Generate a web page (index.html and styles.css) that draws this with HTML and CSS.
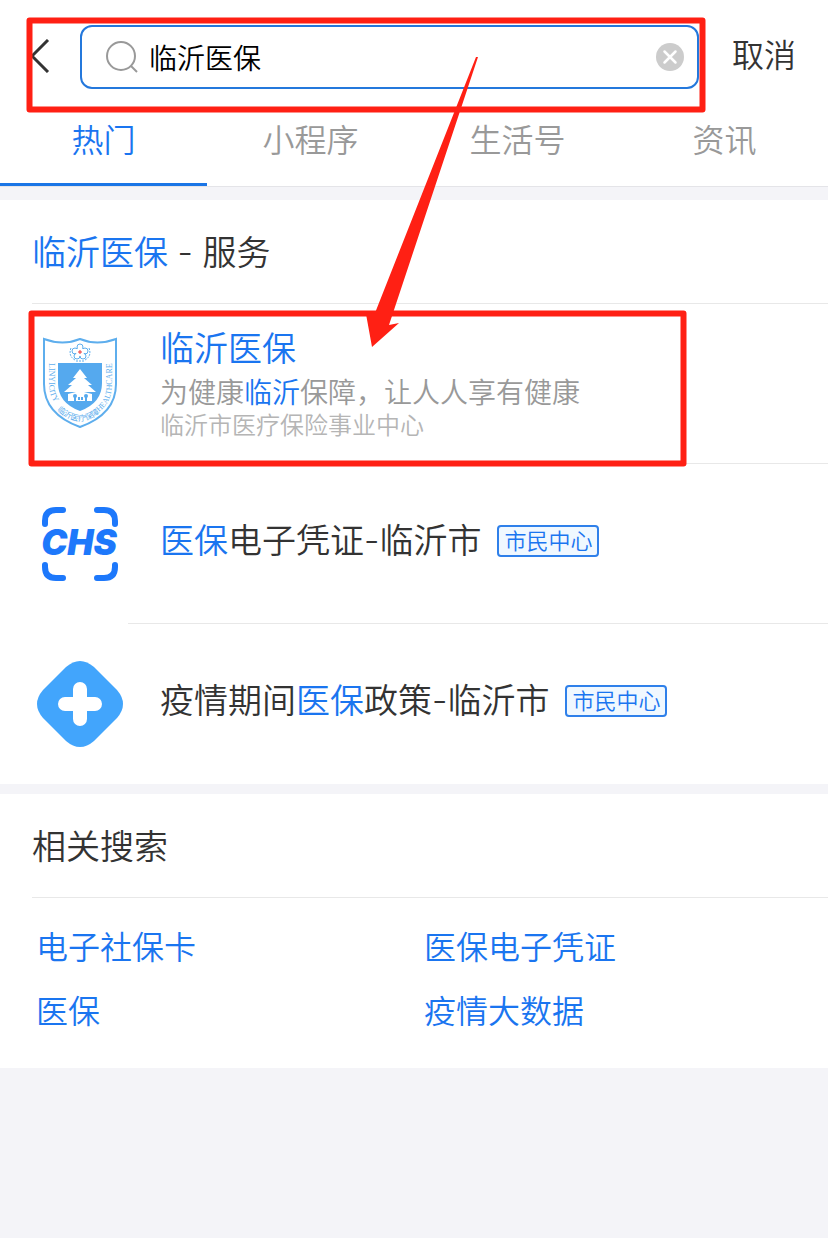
FILE: index.html
```html
<!DOCTYPE html>
<html lang="zh-CN">
<head>
<meta charset="utf-8">
<meta name="viewport" content="width=device-width, initial-scale=1">
<title>临沂医保</title>
<link rel="stylesheet" href="styles.css">
</head>
<body>
<header class="topbar">
  <button class="back" type="button" aria-label="返回">
    <svg width="20" height="34" viewBox="0 0 20 34"><path d="M18 1 2 17l16 16" fill="none" stroke="#333" stroke-width="3"/></svg>
  </button>
  <form class="search">
    <svg class="search-icon" width="34" height="34" viewBox="0 0 34 34" fill="none" stroke="#999" stroke-width="2"><circle cx="16" cy="16" r="14"/><path d="m26 26 6 6"/></svg>
    <input class="search-input" type="text" value="临沂医保" aria-label="搜索">
    <button class="clear" type="reset" aria-label="清除">
      <svg width="28" height="28" viewBox="0 0 28 28"><circle cx="14" cy="14" r="14" fill="#ccc"/><path d="m8.500 8.500 11 11m0-11-11 11" stroke="#fff" stroke-width="2.500" stroke-linecap="round"/></svg>
    </button>
  </form>
  <button class="cancel" type="button">取消</button>
</header>
<nav class="tabs">
  <a class="tab tab-active" href="#hot">热门</a>
  <a class="tab" href="#apps">小程序</a>
  <a class="tab" href="#life">生活号</a>
  <a class="tab" href="#news">资讯</a>
</nav>
<main>
  <section class="card services">
    <h2 class="card-title"><em>临沂医保</em> - 服务</h2>
    <ul class="results">
      <li class="result">
        <span class="result-icon">
          <svg width="76" height="94" viewBox="0 0 76 94">
            <path d="M2 2q19 7 36 0 17 7 36 0v45q0 30-36 43Q2 77 2 47z" fill="#fff" stroke="#5eaeed" stroke-width="2"/>
            <path d="M16 26h44v20q0 20-22 28-22-8-22-28z" fill="#55a9ee"/>
            <path d="m38 32 7 9h-3l8 7h-4l8 7H41v3h-6v-3H22l8-7h-4l8-7h-3z" fill="#fff"/>
            <path d="m26 57 12-3 12 3v7H26z" fill="#fff"/>
            <path d="M33 64v-5m4 4v-3m3 3v-3m4 4v-5" stroke="#55a9ee" stroke-width="2"/>
            <circle cx="33" cy="59" r="2" fill="#55a9ee"/><circle cx="44" cy="59" r="2" fill="#55a9ee"/>
            <g fill="none" stroke="#5eaeed"><circle cx="38" cy="10" r="3"/><circle cx="43" cy="14" r="3"/><circle cx="41" cy="19" r="3"/><circle cx="35" cy="19" r="3"/><circle cx="33" cy="14" r="3"/><path d="M29 11q-3 8 4 12m14-12q3 8-4 12M34 24h8" stroke-dasharray="2 1"/></g>
            <circle cx="38" cy="15" r="4" fill="#fff"/><path d="M36 15h4M38 13v4" stroke="#e33"/>
            <path id="ring-left" d="M7 26v21q0 16 13 25" fill="none"/>
            <path id="ring-base" d="M15 73q23 22 46 0" fill="none"/>
            <path id="ring-right" d="M57 75q13-10 13-28V20" fill="none"/>
            <g class="seal-text"><text><textPath href="#ring-left">LINYICITY</textPath></text><text class="seal-name"><textPath href="#ring-base">临沂医疗保障</textPath></text><text><textPath href="#ring-right">HEALTHCARE</textPath></text></g>
          </svg>
        </span>
        <div class="result-body result-stack">
          <h3 class="result-title"><a href="#s1"><em>临沂医保</em></a></h3>
          <p class="result-desc">为健康<em>临沂</em>保障，让人人享有健康</p>
          <p class="result-org">临沂市医疗保险事业中心</p>
        </div>
      </li>
      <li class="result">
        <span class="result-icon">
          <svg width="80" height="78" viewBox="0 0 80 78">
            <path d="M5 19v-3Q5 5 16 5h7M57 5h7q11 0 11 11v3M5 60v2q0 11 11 11h7m34 0h7q11 0 11-11v-2" fill="none" stroke="#1d78fb" stroke-width="6"  stroke-linecap="round"/>
            <text class="chs" x="39" y="50" text-anchor="middle">CHS</text>
          </svg>
        </span>
        <div class="result-body result-line">
          <h3 class="result-title"><a href="#s2"><em>医保</em>电子凭证-临沂市</a></h3><span class="tag">市民中心</span>
        </div>
      </li>
      <li class="result">
        <span class="result-icon">
          <svg width="88" height="88" viewBox="0 0 88 88">
            <path d="M30 7q14-12 28 0l23 23q12 14 0 28L58 81q-14 12-28 0L7 58q-12-14 0-28z" fill="#42a5fc"/>
            <path d="M44 29v30M29 44h30" stroke="#fff" stroke-width="14" stroke-linecap="round"/>
          </svg>
        </span>
        <div class="result-body result-line">
          <h3 class="result-title"><a href="#s3">疫情期间<em>医保</em>政策-临沂市</a></h3><span class="tag">市民中心</span>
        </div>
      </li>
    </ul>
  </section>
  <section class="card related">
    <h2 class="card-title">相关搜索</h2>
    <div class="related-links">
      <a href="#r1">电子社保卡</a><a href="#r2">医保电子凭证</a>
      <a href="#r3">医保</a><a href="#r4">疫情大数据</a>
    </div>
  </section>
</main>
<svg class="marks" width="720" height="480" viewBox="0 0 720 480" aria-hidden="true">
  <g fill="none" stroke="#ff2014" stroke-width="6" stroke-linejoin="round"><path d="M29.500 20.500h673v89h-673zM31.500 313.500h652v150h-652z"/></g>
  <path d="M476 57h2L389 325l10-2-27 24-6-33 9-1z" fill="#ff2014"/>
</svg>
</body>
</html>
```
FILE: styles.css
```css
* { box-sizing: border-box; margin: 0; padding: 0; }
body {
  position: relative;
  background: #f4f4f8;
  color: #333;
  font-family: Inter, "Noto Sans CJK SC", sans-serif;
  font-weight: 350;
}
a { color: inherit; text-decoration: none; }
em { color: #1a75f0; font-style: normal; }
button { border: 0; background: none; font: inherit; color: inherit; }
svg { display: block; }
h2, h3 { font-weight: inherit; }
.topbar { display: flex; align-items: center; padding: 25px 32px 7px 30px; background: #fff; }
.back { width: 50px; height: 64px; display: flex; align-items: center; padding-bottom: 2px; }
.search {
  flex: 1;
  min-width: 0;
  height: 64px;
  display: flex;
  align-items: center;
  gap: 10px;
  padding: 0 13px 0 23px;
  border: 2px solid #2478dc;
  border-radius: 12px;
}
.search-icon { flex: none; }
.search-input {
  flex: 1;
  min-width: 0;
  border: 0;
  outline: 0;
  background: none;
  color: #000;
  font: inherit;
  font-size: 28px;
}
.cancel { margin-left: 33px; padding-bottom: 2px; font-size: 32px; line-height: 48px; }
.tabs { display: grid; grid-template-columns: repeat(4, 1fr); border-bottom: 1px solid #e4e4e8; background: #fff; }
.tab { padding-top: 3px; border-bottom: 3px solid transparent; font-size: 32px; line-height: 84px; text-align: center; color: #999; }
.tab-active { border-color: #1a75e6; color: #1a75f0; }
.card { background: #fff; }
.services { margin-top: 13px; }
.card-title { padding-top: 2px; margin-left: 32px; border-bottom: 1px solid #e8e8e8; font-size: 34px; line-height: 101px; }
.results { list-style: none; }
.result { position: relative; display: flex; align-items: center; gap: 32px; height: 160px; padding-left: 32px; }
.result:not(:last-child)::after { content: ""; position: absolute; left: 128px; right: 0; bottom: 0; height: 1px; background: #e8e8e8; }
.result-icon { width: 96px; flex: none; display: flex; justify-content: center; }
.result-stack { padding-bottom: 4px; }
.result-line { display: flex; align-items: center; gap: 16px; padding-bottom: 6px; }
.result-title { font-size: 34px; line-height: 48px; }
.result-desc { font-size: 28px; line-height: 40px; color: #999; }
.result-org { font-size: 24px; line-height: 26px; color: #b5b5b5; }
.tag { padding: 0 5px; border: 2px solid #2f80ea; border-radius: 4px; background: #f0f8ff; color: #1a75f0; font-size: 22px; line-height: 28px; }
.related { margin-top: 10px; padding-bottom: 24px; }
.related-links { display: grid; grid-template-columns: 1fr 1fr; padding: 18px 16px 0 36px; font-size: 32px; line-height: 64px; color: #1a75f0; }
.marks { position: absolute; left: 0; top: 0; pointer-events: none; }
.chs { font: italic 900 35px Inter, sans-serif; fill: #1d78fb; }
.seal-text { font: 8px "Liberation Serif", serif; fill: #5eaeed; }
.seal-name { font: 8px "Noto Sans CJK SC", sans-serif; }
```
